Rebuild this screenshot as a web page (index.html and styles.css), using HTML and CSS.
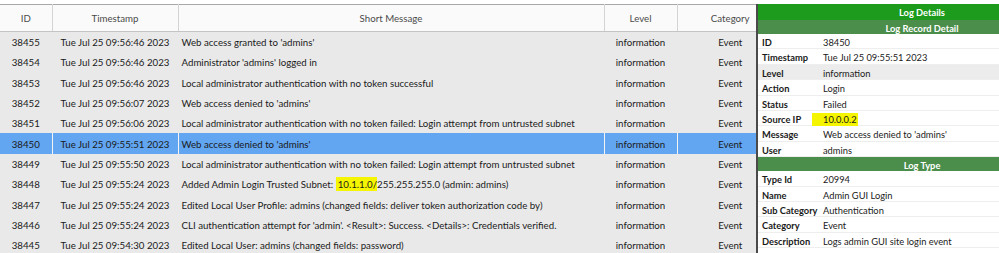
FILE: index.html
```html
<!DOCTYPE html>
<html lang="en">
  <head>
    <meta charset="UTF-8" />
    <meta name="viewport" content="width=device-width, initial-scale=1.0" />
    <title>Log Viewer</title>
    <link rel="stylesheet" href="styles.css">
  </head>
  <body>
    <div class="page">
      <section class="log-list">
        <table class="log-table">
          <colgroup>
            <col class="col-id" />
            <col class="col-time" />
            <col class="col-msg" />
            <col class="col-level" />
            <col class="col-cat" />
          </colgroup>
          <thead>
            <tr>
              <th>ID</th>
              <th>Timestamp</th>
              <th>Short Message</th>
              <th>Level</th>
              <th>Category</th>
            </tr>
          </thead>
          <tbody>
            <tr>
              <td>38455</td>
              <td>Tue Jul 25 09:56:46 2023</td>
              <td class="msg">Web access granted to 'admins'</td>
              <td>information</td>
              <td>Event</td>
            </tr>
            <tr>
              <td>38454</td>
              <td>Tue Jul 25 09:56:46 2023</td>
              <td class="msg">Administrator 'admins' logged in</td>
              <td>information</td>
              <td>Event</td>
            </tr>
            <tr>
              <td>38453</td>
              <td>Tue Jul 25 09:56:46 2023</td>
              <td class="msg">Local administrator authentication with no token successful</td>
              <td>information</td>
              <td>Event</td>
            </tr>
            <tr>
              <td>38452</td>
              <td>Tue Jul 25 09:56:07 2023</td>
              <td class="msg">Web access denied to 'admins'</td>
              <td>information</td>
              <td>Event</td>
            </tr>
            <tr>
              <td>38451</td>
              <td>Tue Jul 25 09:56:06 2023</td>
              <td class="msg">Local administrator authentication with no token failed: Login attempt from untrusted subnet</td>
              <td>information</td>
              <td>Event</td>
            </tr>
            <tr class="selected">
              <td>38450</td>
              <td>Tue Jul 25 09:55:51 2023</td>
              <td class="msg">Web access denied to 'admins'</td>
              <td>information</td>
              <td>Event</td>
            </tr>
            <tr>
              <td>38449</td>
              <td>Tue Jul 25 09:55:50 2023</td>
              <td class="msg">Local administrator authentication with no token failed: Login attempt from untrusted subnet</td>
              <td>information</td>
              <td>Event</td>
            </tr>
            <tr>
              <td>38448</td>
              <td>Tue Jul 25 09:55:24 2023</td>
              <td class="msg">Added Admin Login Trusted Subnet: <mark class="hl">10.1.1.0/</mark>255.255.255.0 (admin: admins)</td>
              <td>information</td>
              <td>Event</td>
            </tr>
            <tr>
              <td>38447</td>
              <td>Tue Jul 25 09:55:24 2023</td>
              <td class="msg">Edited Local User Profile: admins (changed fields: deliver token authorization code by)</td>
              <td>information</td>
              <td>Event</td>
            </tr>
            <tr>
              <td>38446</td>
              <td>Tue Jul 25 09:55:24 2023</td>
              <td class="msg">CLI authentication attempt for 'admin'. &lt;Result&gt;: Success. &lt;Details&gt;: Credentials verified.</td>
              <td>information</td>
              <td>Event</td>
            </tr>
            <tr>
              <td>38445</td>
              <td>Tue Jul 25 09:54:30 2023</td>
              <td class="msg">Edited Local User: admins (changed fields: password)</td>
              <td>information</td>
              <td>Event</td>
            </tr>
          </tbody>
        </table>
      </section>

      <aside class="details">
        <div class="panel-title">Log Details</div>
        <div class="section-title">Log Record Detail</div>
        <div class="detail-row"><span class="label">ID</span><span>38450</span></div>
        <div class="detail-row"><span class="label">Timestamp</span><span>Tue Jul 25 09:55:51 2023</span></div>
        <div class="detail-row hover"><span class="label">Level</span><span>information</span></div>
        <div class="detail-row"><span class="label">Action</span><span>Login</span></div>
        <div class="detail-row"><span class="label">Status</span><span>Failed</span></div>
        <div class="detail-row"><span class="label">Source IP</span><span><mark class="hl ip">10.0.0.2</mark></span></div>
        <div class="detail-row"><span class="label">Message</span><span>Web access denied to 'admins'</span></div>
        <div class="detail-row"><span class="label">User</span><span>admins</span></div>
        <div class="section-title">Log Type</div>
        <div class="detail-row"><span class="label">Type Id</span><span>20994</span></div>
        <div class="detail-row"><span class="label">Name</span><span>Admin GUI Login</span></div>
        <div class="detail-row"><span class="label">Sub Category</span><span>Authentication</span></div>
        <div class="detail-row"><span class="label">Category</span><span>Event</span></div>
        <div class="detail-row"><span class="label">Description</span><span>Logs admin GUI site login event</span></div>
      </aside>
    </div>
  </body>
</html>
```

FILE: styles.css
```css
body {
  margin: 0;
  background-color: white;
  font-family: Lato, "Liberation Sans", sans-serif;
  color: #1a1a1a;
}
.page {
  display: flex;
  width: 999px;
  height: 253px;
  padding-top: 4px;
  box-sizing: border-box;
  overflow: hidden;
}
.log-list {
  flex: none;
  width: 756px;
  overflow: hidden;
  box-shadow: inset -3px 0 0 #d0d0d0;
}
.log-table {
  width: 783px;
  table-layout: fixed;
  border-collapse: collapse;
  border-top: 1px solid #a8a8a8;
  font-size: 9.7px;
}
.col-id {
  width: 52px;
}
.col-time {
  width: 126px;
}
.col-msg {
  width: 426px;
}
.col-level {
  width: 73px;
}
.col-cat {
  width: 106px;
}
.log-table th {
  height: 26px;
  padding: 0;
  font-weight: normal;
  color: #4a4a4a;
  background-color: #fafafa;
  border-left: 1px solid #d4d4d4;
  border-bottom: 1px solid #c4c4c4;
}
.log-table th:first-child {
  border-left: none;
}
.log-table td {
  height: 20.3px;
  padding: 0 3px;
  text-align: center;
  white-space: nowrap;
  overflow: hidden;
  background-color: #e9e9e9;
  border-left: 1px solid #e9e9e9;
}
.log-table td:first-child {
  border-left: none;
}
.log-table td.msg {
  text-align: left;
}
.log-table .selected td {
  background-color: #62a5f0;
  border-left-color: #f4f4f4;
}
.hl {
  background-color: #f5f500;
  color: inherit;
  padding: 1px 0 1px 2px;
}
.details {
  flex: none;
  width: 243px;
  border-left: 2px solid #4a4a4a;
  box-sizing: border-box;
  background-color: white;
  font-size: 9.3px;
}
.panel-title,
.section-title {
  padding-left: 87px;
  color: white;
  font-weight: bold;
  text-align: center;
}
.panel-title {
  height: 16px;
  line-height: 18px;
  background-color: #1c9b1c;
}
.section-title {
  height: 14px;
  line-height: 17px;
  background-color: #4b8e4b;
}
.section-title.type {
  background-color: #3f8a3f;
}
.detail-row {
  display: grid;
  grid-template-columns: 61px 1fr;
  height: 15.4px;
  line-height: 14px;
  padding: 2px 0 0 4px;
  border-bottom: 1px solid #eeeeee;
  box-sizing: border-box;
  white-space: nowrap;
}
.detail-row.hover {
  background-color: #ececec;
}
.label {
  font-weight: bold;
}
.hl.ip {
  margin-left: -11px;
  padding: 1px 1px 1px 11px;
}
```
